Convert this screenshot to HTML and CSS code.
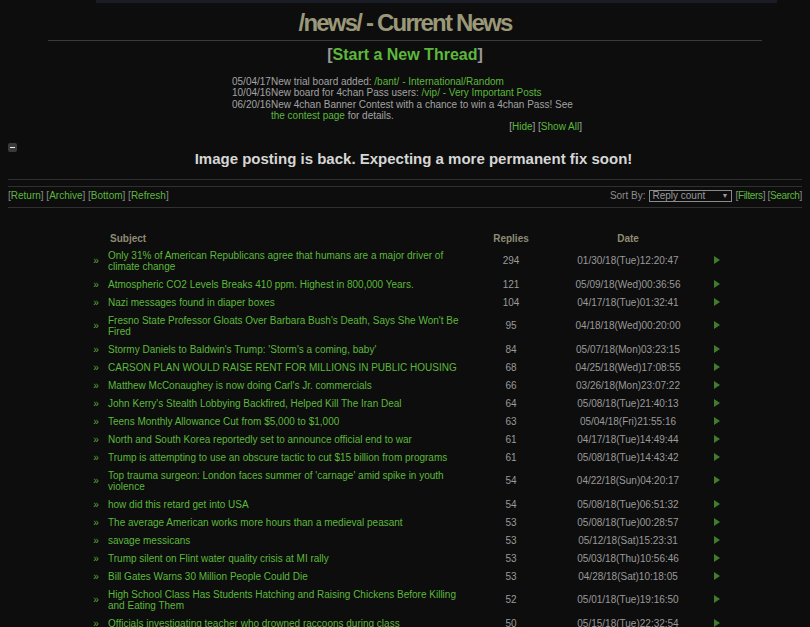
FILE: index.html
```html
<!DOCTYPE html>
<html>
<head>
<meta charset="utf-8">
<link rel="stylesheet" href="styles.css">
</head>
<body>
<div class="topbar"></div>
<div class="page">
  <div class="title">/news/ - Current News</div>
  <div class="rule-top"></div>
  <div class="post-link"><span class="br">[</span><a>Start a New Thread</a><span class="br">]</span></div>
  <div class="news">
    <div class="news-item"><span class="news-date">05/04/17</span><span class="news-text">New trial board added: <a>/bant/ - International/Random</a></span></div>
    <div class="news-item"><span class="news-date">10/04/16</span><span class="news-text">New board for 4chan Pass users: <a>/vip/ - Very Important Posts</a></span></div>
    <div class="news-item"><span class="news-date">06/20/16</span><span class="news-text">New 4chan Banner Contest with a chance to win a 4chan Pass! See <a>the contest page</a> for details.</span></div>
    <div class="news-ctrl">[<a>Hide</a>] [<a>Show All</a>]</div>
  </div>
  <div class="msg-row">
    <span class="toggle"></span>
    <div class="msg">Image posting is back. Expecting a more permanent fix soon!</div>
  </div>
  <div class="rule rule-a"></div>
  <div class="rule rule-b"></div>
  <div class="nav">
    <div class="nav-left">[<a>Return</a>] [<a>Archive</a>] [<a>Bottom</a>] [<a>Refresh</a>]</div>
    <div class="nav-right">
      <span class="sort-label">Sort By:</span>
      <span class="select"><span>Reply count</span><span class="caret">▼</span></span>
      <span class="nav-links">[<a>Filters</a>] [<a>Search</a>]</span>
    </div>
  </div>
  <div class="rule"></div>
  <table class="threads">
    <colgroup><col class="c1"><col class="c2"><col class="c3"><col class="c4"><col class="c5"></colgroup>
    <thead>
      <tr><th></th><th class="th-subject">Subject</th><th>Replies</th><th>Date</th><th></th></tr>
    </thead>
    <tbody>
      <tr><td class="bullet">»</td><td class="subject"><a>Only 31% of American Republicans agree that humans are a major driver of climate change</a></td><td class="num">294</td><td class="date">01/30/18(Tue)12:20:47</td><td class="go"><span class="arrow"></span></td></tr>
      <tr><td class="bullet">»</td><td class="subject"><a>Atmospheric CO2 Levels Breaks 410 ppm. Highest in 800,000 Years.</a></td><td class="num">121</td><td class="date">05/09/18(Wed)00:36:56</td><td class="go"><span class="arrow"></span></td></tr>
      <tr><td class="bullet">»</td><td class="subject"><a>Nazi messages found in diaper boxes</a></td><td class="num">104</td><td class="date">04/17/18(Tue)01:32:41</td><td class="go"><span class="arrow"></span></td></tr>
      <tr><td class="bullet">»</td><td class="subject"><a>Fresno State Professor Gloats Over Barbara Bush's Death, Says She Won't Be Fired</a></td><td class="num">95</td><td class="date">04/18/18(Wed)00:20:00</td><td class="go"><span class="arrow"></span></td></tr>
      <tr><td class="bullet">»</td><td class="subject"><a>Stormy Daniels to Baldwin's Trump: 'Storm's a coming, baby'</a></td><td class="num">84</td><td class="date">05/07/18(Mon)03:23:15</td><td class="go"><span class="arrow"></span></td></tr>
      <tr><td class="bullet">»</td><td class="subject"><a>CARSON PLAN WOULD RAISE RENT FOR MILLIONS IN PUBLIC HOUSING</a></td><td class="num">68</td><td class="date">04/25/18(Wed)17:08:55</td><td class="go"><span class="arrow"></span></td></tr>
      <tr><td class="bullet">»</td><td class="subject"><a>Matthew McConaughey is now doing Carl's Jr. commercials</a></td><td class="num">66</td><td class="date">03/26/18(Mon)23:07:22</td><td class="go"><span class="arrow"></span></td></tr>
      <tr><td class="bullet">»</td><td class="subject"><a>John Kerry's Stealth Lobbying Backfired, Helped Kill The Iran Deal</a></td><td class="num">64</td><td class="date">05/08/18(Tue)21:40:13</td><td class="go"><span class="arrow"></span></td></tr>
      <tr><td class="bullet">»</td><td class="subject"><a>Teens Monthly Allowance Cut from $5,000 to $1,000</a></td><td class="num">63</td><td class="date">05/04/18(Fri)21:55:16</td><td class="go"><span class="arrow"></span></td></tr>
      <tr><td class="bullet">»</td><td class="subject"><a>North and South Korea reportedly set to announce official end to war</a></td><td class="num">61</td><td class="date">04/17/18(Tue)14:49:44</td><td class="go"><span class="arrow"></span></td></tr>
      <tr><td class="bullet">»</td><td class="subject"><a>Trump is attempting to use an obscure tactic to cut $15 billion from programs</a></td><td class="num">61</td><td class="date">05/08/18(Tue)14:43:42</td><td class="go"><span class="arrow"></span></td></tr>
      <tr><td class="bullet">»</td><td class="subject"><a>Top trauma surgeon: London faces summer of 'carnage' amid spike in youth violence</a></td><td class="num">54</td><td class="date">04/22/18(Sun)04:20:17</td><td class="go"><span class="arrow"></span></td></tr>
      <tr><td class="bullet">»</td><td class="subject"><a>how did this retard get into USA</a></td><td class="num">54</td><td class="date">05/08/18(Tue)06:51:32</td><td class="go"><span class="arrow"></span></td></tr>
      <tr><td class="bullet">»</td><td class="subject"><a>The average American works more hours than a medieval peasant</a></td><td class="num">53</td><td class="date">05/08/18(Tue)00:28:57</td><td class="go"><span class="arrow"></span></td></tr>
      <tr><td class="bullet">»</td><td class="subject"><a>savage messicans</a></td><td class="num">53</td><td class="date">05/12/18(Sat)15:23:31</td><td class="go"><span class="arrow"></span></td></tr>
      <tr><td class="bullet">»</td><td class="subject"><a>Trump silent on Flint water quality crisis at MI rally</a></td><td class="num">53</td><td class="date">05/03/18(Thu)10:56:46</td><td class="go"><span class="arrow"></span></td></tr>
      <tr><td class="bullet">»</td><td class="subject"><a>Bill Gates Warns 30 Million People Could Die</a></td><td class="num">53</td><td class="date">04/28/18(Sat)10:18:05</td><td class="go"><span class="arrow"></span></td></tr>
      <tr><td class="bullet">»</td><td class="subject"><a>High School Class Has Students Hatching and Raising Chickens Before Killing and Eating Them</a></td><td class="num">52</td><td class="date">05/01/18(Tue)19:16:50</td><td class="go"><span class="arrow"></span></td></tr>
      <tr><td class="bullet">»</td><td class="subject"><a>Officials investigating teacher who drowned raccoons during class</a></td><td class="num">50</td><td class="date">05/15/18(Tue)22:32:54</td><td class="go"><span class="arrow"></span></td></tr>
    </tbody>
  </table>
</div>
</body>
</html>
```

FILE: styles.css
```css
html, body {
  margin: 0;
  padding: 0;
  background: #0d0d0d;
  overflow: hidden;
}
body {
  color: #a6a6a6;
  font-family: "Liberation Sans", Arial, sans-serif;
  font-size: 10px;
}
a {
  color: #5cb83c;
  text-decoration: none;
}
.topbar {
  height: 3px;
  width: 681px;
  margin-left: 96px;
  background: #1a1d25;
}
.page {
  padding: 0 8px;
}
.title {
  margin-top: 6px;
  text-align: center;
  font-size: 24px;
  font-weight: bold;
  letter-spacing: -1.8px;
  line-height: 28px;
  color: #9a9878;
}
.rule-top {
  width: 90%;
  height: 1px;
  margin: 3px auto 0;
  background: #3a3a3a;
}
.post-link {
  margin-top: 4px;
  text-align: center;
  font-size: 16px;
  font-weight: bold;
  line-height: 20px;
}
.post-link .br {
  color: #9a9a9a;
}
.news {
  width: 350px;
  margin: 11px 0 0 224px;
  line-height: 11.33px;
  color: #a3a3a3;
}
.news-item {
  display: flex;
}
.news-date {
  flex: none;
}
.news-text {
  flex: 1;
}
.news-ctrl {
  text-align: right;
}
.msg-row {
  display: flex;
  gap: 8px;
  margin-top: 10px;
}
.toggle {
  flex: none;
  width: 9px;
  height: 9px;
  border-radius: 2px;
  background: #3a3a3a;
  position: relative;
}
.toggle::after {
  content: "";
  position: absolute;
  left: 2px;
  top: 4px;
  width: 5px;
  height: 1px;
  background: #f0f0f0;
}
.msg {
  flex: 1;
  padding-top: 6px;
  text-align: center;
  font-size: 15px;
  font-weight: bold;
  line-height: 19px;
  color: #d6d6d6;
}
.rule {
  height: 1px;
  background: #303030;
}
.rule-a {
  margin-top: 11px;
}
.rule-b {
  margin-top: 6px;
}
.nav {
  display: flex;
  justify-content: space-between;
  align-items: center;
  padding-top: 2px;
  margin-bottom: 4px;
  line-height: 14px;
  color: #8e8e8e;
}
.nav-right {
  display: flex;
  align-items: center;
}
.sort-label {
  margin-right: 4px;
}
.select {
  display: flex;
  justify-content: space-between;
  align-items: center;
  box-sizing: border-box;
  width: 83px;
  height: 12px;
  padding: 0 3px 0 2px;
  margin-right: 3px;
  border: 1px solid #8a8a8a;
  background: #0d0d0d;
  color: #9a9a9a;
  line-height: 10px;
}
.caret {
  font-size: 7px;
}
.nav-links {
  letter-spacing: -0.35px;
}
.threads {
  margin: 23px 0 0 80px;
  border-collapse: collapse;
  border-spacing: 0;
  table-layout: fixed;
  width: 647px;
}
.c1 { width: 16px; }
.c2 { width: 361px; }
.c3 { width: 92px; }
.c4 { width: 142px; }
.c5 { width: 36px; }
.threads th {
  padding: 2px 4px;
  line-height: 11px;
  font-size: 10px;
  font-weight: bold;
  color: #8d8b74;
  text-align: center;
}
.threads th.th-subject {
  text-align: left;
  padding-left: 6px;
}
.threads td {
  padding: 4px 4px 3px;
  line-height: 11px;
  vertical-align: middle;
}
.bullet {
  text-align: center;
  color: #5aa83a;
}
.threads td.bullet {
  padding: 4px 0 3px;
}
.num, .date {
  text-align: center;
  color: #9a9a9a;
}
.go {
  text-align: center;
}
.arrow {
  display: block;
  width: 0;
  height: 0;
  margin: -1px auto 0;
  border-left: 6px solid #3f7c2c;
  border-top: 4px solid transparent;
  border-bottom: 4px solid transparent;
}
```
